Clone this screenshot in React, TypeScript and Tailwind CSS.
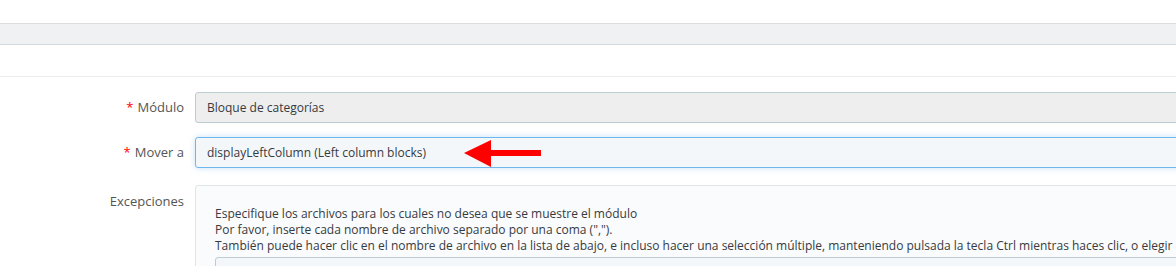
import React from "react";

export default function App() {
  return (
    <div className="w-[1176px] h-[266px] overflow-hidden bg-white text-[#363a41]" style={{ fontFamily: '"Open Sans", "Noto Sans", sans-serif' }}>
      <div className="h-[23px]" />
      <div className="h-[22px] bg-[#f0f1f3] border-t border-b border-t-[#dcdcdc] border-b-[#d3d8dd]" />
      <div className="h-[32px] border-b border-[#ececec]" />
      <div className="pt-[15px] flex flex-col">
        <div className="flex items-center h-[31px]">
          <div className="w-[184px] shrink-0 text-right text-[13px] text-[#555]">
            <span className="text-[#f00] mr-[4px]">*</span>Módulo
          </div>
          <div className="ml-[11px] shrink-0 w-[1100px] h-[31px] bg-[#eeeeee] border border-[#bbcdd2] rounded-[3px] flex items-center pl-[11px] text-[12px] text-[#363a41]">
            Bloque de categorías
          </div>
        </div>
        <div className="flex items-center h-[31px] mt-[14px]">
          <div className="w-[184px] shrink-0 text-right text-[13px] text-[#555]">
            <span className="text-[#f00] mr-[4px]">*</span>Mover a
          </div>
          <div className="relative ml-[11px] shrink-0 w-[1100px] h-[31px] bg-[#f4f7f9] border border-[#6db7ed] rounded-[3px] flex items-center pl-[11px] text-[12px] text-[#363a41] shadow-[0_0_6px_rgba(100,170,230,0.35)]">
            displayLeftColumn (Left column blocks)
            <svg className="absolute left-[267px] top-[1px]" width="80" height="30" viewBox="0 0 80 30">
              <polygon points="1,14 28,1 28,11 78,11 78,17 28,17 28,28" fill="#ff0000" />
            </svg>
          </div>
        </div>
        <div className="flex mt-[17px]">
          <div className="w-[184px] shrink-0 text-right text-[13px] text-[#555] pt-[7px]">Excepciones</div>
          <div className="ml-[11px] shrink-0 w-[1100px] h-[120px] bg-[#fafbfc] border border-[#dfe6ea] rounded-[3px] pl-[19px] pt-[20px] text-[12px] leading-[16px] text-[#363a41]">
            <div>Especifique los archivos para los cuales no desea que se muestre el módulo</div>
            <div>Por favor, inserte cada nombre de archivo separado por una coma (",").</div>
            <div className="whitespace-nowrap">También puede hacer clic en el nombre de archivo en la lista de abajo, e incluso hacer una selección múltiple, manteniendo pulsada la tecla Ctrl mientras haces clic, o elegir un rango</div>
            <div className="mt-[3px] h-[40px] w-[1000px] bg-[#f4f7f9] border border-[#bbcdd2] rounded-[3px]" />
          </div>
        </div>
      </div>
    </div>
  );
}
